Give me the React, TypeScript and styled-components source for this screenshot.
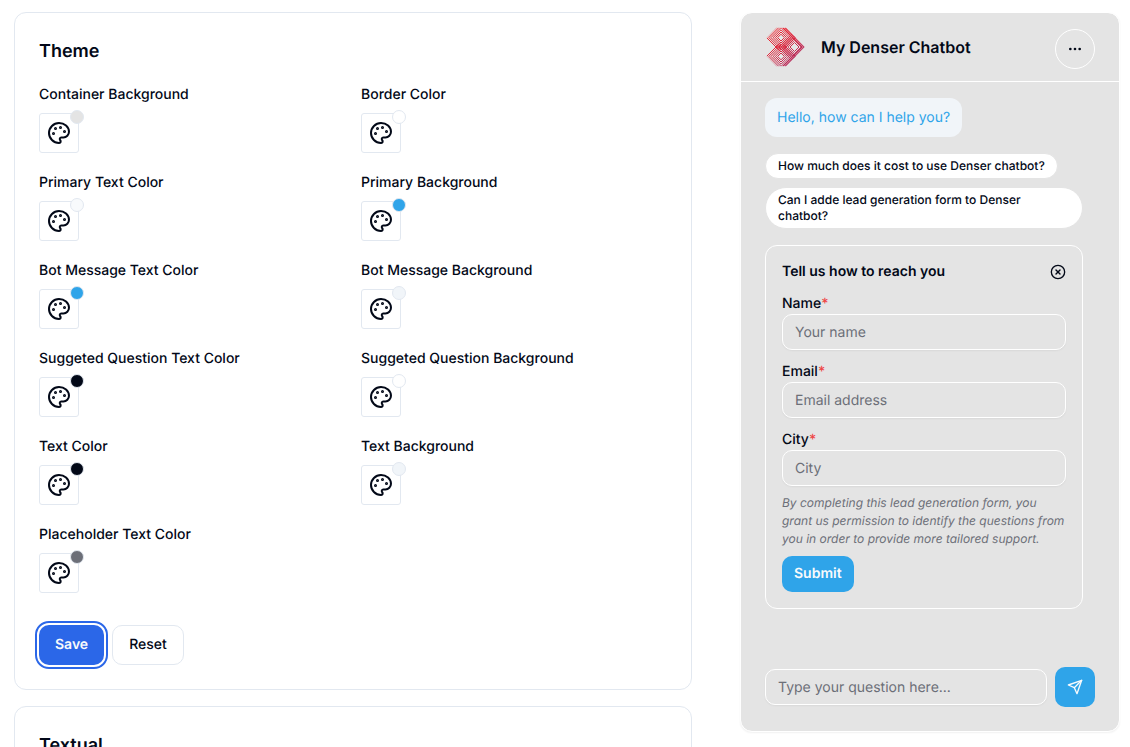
import React from "react";
import styled, { createGlobalStyle } from "styled-components";
import { CircleX, Ellipsis } from "lucide-react";

const GlobalStyle = createGlobalStyle`
  *, *::before, *::after { box-sizing: border-box; }
  body {
    margin: 0;
    background: #ffffff;
    color: #020817;
    font-family: Inter, "Liberation Sans", sans-serif;
    font-size: 14px;
    line-height: 20px;
    text-rendering: geometricPrecision;
  }
  h2, h3, p { margin: 0; }
  button, input { font: inherit; color: inherit; text-rendering: inherit; }
  button { cursor: pointer; }
`;

const Page = styled.main`
  display: flex;
  gap: 48px;
  height: 100vh;
  padding: 0 10px 0 14px;
`;

const Settings = styled.div`
  flex: 1;
  min-width: 0;
  display: flex;
  flex-direction: column;
  gap: 16px;
  padding-top: 12px;
  overflow-y: auto;
  scrollbar-width: none;
`;

const Card = styled.section`
  flex: none;
  padding: 24px;
  border: 1px solid #e2e8f0;
  border-radius: 12px;
`;

const CardTitle = styled.h2`
  font-size: 18px;
  font-weight: 600;
  line-height: 30px;
`;

const ColorGrid = styled.div`
  display: grid;
  grid-template-columns: 1fr 1fr;
  gap: 20px 16px;
  margin-top: 18px;
`;

const ColorField = styled.div`
  display: flex;
  flex-direction: column;
  align-items: flex-start;
  gap: 8px;
`;

const ColorLabel = styled.label`
  font-weight: 500;
`;

const Swatch = styled.div`
  position: relative;
  display: flex;
`;

const SwatchButton = styled.button`
  display: grid;
  place-items: center;
  width: 40px;
  height: 40px;
  padding: 0;
  border: 1px solid #e2e8f0;
  border-radius: 3px;
  background: #ffffff;
`;

const ColorDot = styled.span<{ $color: string }>`
  position: absolute;
  top: -3px;
  right: -5px;
  width: 14px;
  height: 14px;
  border: 1px solid #e2e8f0;
  border-radius: 50%;
  background: ${(p) => p.$color};
`;

const Actions = styled.div`
  display: flex;
  gap: 8px;
  margin-top: 32px;
`;

const ActionButton = styled.button<{ $primary?: boolean }>`
  height: 40px;
  padding: 0 16px;
  border: ${(p) => (p.$primary ? "0" : "1px solid #e2e8f0")};
  border-radius: 10px;
  background: ${(p) => (p.$primary ? "#2b67e8" : "#ffffff")};
  color: ${(p) => (p.$primary ? "#f8fafc" : "#020817")};
  font-weight: ${(p) => (p.$primary ? 600 : 500)};
  outline: ${(p) => (p.$primary ? "2px solid #2b67e8" : "none")};
  outline-offset: 2px;
`;

const Chat = styled.aside`
  display: flex;
  flex-direction: column;
  flex: none;
  width: 380px;
  margin: 12px 0 15px;
  border: 1px solid #ffffff;
  border-radius: 12px;
  background: #e4e4e4;
  background-clip: padding-box;
  box-shadow: 0 1px 2px rgba(0, 0, 0, 0.06);
`;

const ChatHeader = styled.header`
  display: flex;
  gap: 16px;
  padding: 14px 24px 12px;
  border-bottom: 1px solid #ffffff;
`;

const ChatTitle = styled.h2`
  flex: 1;
  font-size: 16px;
  font-weight: 600;
  line-height: 40px;
`;

const MenuButton = styled.button`
  display: grid;
  place-items: center;
  align-self: flex-end;
  width: 40px;
  height: 40px;
  margin-top: 2px;
  padding: 0;
  border: 1px solid #ffffff;
  border-radius: 50%;
  background: transparent;
`;

const Messages = styled.div`
  display: flex;
  flex: 1;
  flex-direction: column;
  align-items: flex-start;
  gap: 16px;
  padding: 16px 36px 16px 24px;
`;

const BotMessage = styled.p`
  padding: 8px 12px;
  border-radius: 12px;
  background: #f1f5f9;
  color: #2fa4e9;
  line-height: 23px;
`;

const Suggestions = styled.div`
  display: flex;
  flex-direction: column;
  align-items: flex-start;
  gap: 8px;
`;

const Suggestion = styled.button`
  padding: 4px 12px;
  border: 1px solid #e4e4e4;
  border-radius: 24px;
  background: #ffffff;
  font-size: 12px;
  font-weight: 500;
  line-height: 16px;
  text-align: left;
`;

const LeadForm = styled.form`
  align-self: stretch;
  padding: 16px;
  border: 1px solid #ffffff;
  border-radius: 12px;
`;

const LeadHeader = styled.div`
  display: flex;
  align-items: center;
  justify-content: space-between;
`;

const LeadTitle = styled.h3`
  font-size: 14px;
  font-weight: 600;
  line-height: 20px;
`;

const CloseButton = styled.button`
  display: flex;
  padding: 0;
  border: 0;
  background: none;
`;

const Field = styled.div`
  display: flex;
  flex-direction: column;
  margin-top: 12px;
`;

const FieldLabel = styled.label`
  font-weight: 500;
`;

const Required = styled.span`
  color: #ef4444;
`;

const TextInput = styled.input`
  flex: 1 1 auto;
  min-width: 0;
  height: 36px;
  padding: 0 12px;
  border: 1px solid #ffffff;
  border-radius: 10px;
  background: transparent;
  box-shadow: 0 1px 2px rgba(0, 0, 0, 0.05);
  outline: none;

  &::placeholder {
    color: #6c6f78;
    opacity: 1;
  }
`;

const Consent = styled.p`
  margin: 8px 0;
  color: #6c6f78;
  font-size: 12px;
  font-style: italic;
  line-height: 18px;
`;

const SubmitButton = styled.button`
  height: 36px;
  padding: 0 12px;
  border: 0;
  border-radius: 10px;
  background: #2fa4e9;
  color: #f8fafc;
  font-weight: 600;
`;

const Composer = styled.form`
  display: flex;
  align-items: center;
  gap: 8px;
  padding: 0 24px 24px;
`;

const SendButton = styled.button`
  display: grid;
  place-items: center;
  flex: none;
  width: 40px;
  height: 40px;
  padding: 0;
  border: 0;
  border-radius: 10px;
  background: #2fa4e9;
  color: #f8fafc;
`;

const Icon = styled.svg.attrs({
  viewBox: "0 0 24 24",
  fill: "none",
  stroke: "currentColor",
  strokeWidth: 2,
  strokeLinecap: "round",
  strokeLinejoin: "round",
  "aria-hidden": true,
})<{ $size: number }>`
  display: block;
  width: ${(p) => p.$size}px;
  height: ${(p) => p.$size}px;
`;

const themeColors = [
  { label: "Container Background", color: "#e4e4e4" },
  { label: "Border Color", color: "#ffffff" },
  { label: "Primary Text Color", color: "#f8fafc" },
  { label: "Primary Background", color: "#2fa4e9" },
  { label: "Bot Message Text Color", color: "#2fa4e9" },
  { label: "Bot Message Background", color: "#f1f5f9" },
  { label: "Suggeted Question Text Color", color: "#020817" },
  { label: "Suggeted Question Background", color: "#ffffff" },
  { label: "Text Color", color: "#020817" },
  { label: "Text Background", color: "#f1f5f9" },
  { label: "Placeholder Text Color", color: "#6c6f78" },
];

const leadFields = [
  { id: "name", label: "Name", placeholder: "Your name", type: "text" },
  { id: "email", label: "Email", placeholder: "Email address", type: "email" },
  { id: "city", label: "City", placeholder: "City", type: "text" },
];

function PaletteIcon() {
  return (
    <Icon $size={24}>
      <g fill="currentColor">
        <circle cx="13.5" cy="6.5" r=".5" />
        <circle cx="17.5" cy="10.5" r=".5" />
        <circle cx="8.5" cy="7.5" r=".5" />
        <circle cx="6.5" cy="12.5" r=".5" />
      </g>
      <path d="M12 2C6.5 2 2 6.5 2 12s4.5 10 10 10c.926 0 1.648-.746 1.648-1.688 0-.437-.18-.835-.437-1.125-.29-.289-.438-.652-.438-1.125a1.64 1.64 0 0 1 1.668-1.668h1.996c3.051 0 5.555-2.503 5.555-5.554C21.965 6.012 17.461 2 12 2z" />
    </Icon>
  );
}

function SendIcon() {
  return (
    <Icon $size={16}>
      <path d="m22 2-7 20-4-9-9-4Z" />
      <path d="M22 2 11 13" />
    </Icon>
  );
}

const diamond = (x: number, y: number, r: number) =>
  `M${x - r} ${y}L${x} ${y - r}L${x + r} ${y}L${x} ${y + r}Z`;

/* Three families of nested diamonds that overlap into a woven arrow. */
function DenserLogo() {
  const lobes = [3.4, 5.6, 7.8, 10, 12.2, 14.4];
  const tip = [4.5, 6.7, 8.9, 11.1, 13.3, 15.5];
  return (
    <svg width="40" height="40" viewBox="-1 0 40 40" fill="none" aria-hidden="true">
      <defs>
        <linearGradient id="weave" gradientUnits="userSpaceOnUse" x1="4" y1="2" x2="34" y2="36">
          <stop offset="0" stopColor="#f5222a" />
          <stop offset="0.5" stopColor="#d92a42" />
          <stop offset="1" stopColor="#a92f68" />
        </linearGradient>
        <clipPath id="bounds">
          <path d="M0 11.5L10.5 0.8H20L38.8 20L20 39.2H10.5L0 28.5L7 20Z" />
        </clipPath>
      </defs>
      <g clipPath="url(#bounds)" stroke="url(#weave)" strokeWidth="1">
        {lobes.map((r) => (
          <React.Fragment key={r}>
            <path d={diamond(15, 10.6, r)} />
            <path d={diamond(15, 29.4, r)} />
          </React.Fragment>
        ))}
        {tip.map((r) => (
          <path key={r} d={diamond(28.5, 20, r)} />
        ))}
        <path d="M19.2 1L38.2 20L19.2 39M17 1L36 20L17 39" />
      </g>
    </svg>
  );
}

export default function App() {
  return (
    <>
      <GlobalStyle />
      <Page>
        <Settings>
          <Card>
            <CardTitle>Theme</CardTitle>
            <ColorGrid>
              {themeColors.map(({ label, color }, i) => {
                const id = `color-${i}`;
                return (
                  <ColorField key={label}>
                    <ColorLabel htmlFor={id}>{label}</ColorLabel>
                    <Swatch>
                      <SwatchButton id={id} type="button">
                        <PaletteIcon />
                      </SwatchButton>
                      <ColorDot $color={color} />
                    </Swatch>
                  </ColorField>
                );
              })}
            </ColorGrid>
            <Actions>
              <ActionButton type="button" $primary>
                Save
              </ActionButton>
              <ActionButton type="button">Reset</ActionButton>
            </Actions>
          </Card>
          <Card>
            <CardTitle>Textual</CardTitle>
          </Card>
        </Settings>

        <Chat>
          <ChatHeader>
            <DenserLogo />
            <ChatTitle>My Denser Chatbot</ChatTitle>
            <MenuButton type="button" aria-label="Menu">
              <Ellipsis size={16} />
            </MenuButton>
          </ChatHeader>
          <Messages>
            <BotMessage>Hello, how can I help you?</BotMessage>
            <Suggestions>
              <Suggestion type="button">How much does it cost to use Denser chatbot?</Suggestion>
              <Suggestion type="button">
                Can I adde lead generation form to Denser chatbot?
              </Suggestion>
            </Suggestions>
            <LeadForm onSubmit={(e) => e.preventDefault()}>
              <LeadHeader>
                <LeadTitle>Tell us how to reach you</LeadTitle>
                <CloseButton type="button" aria-label="Close">
                  <CircleX size={16} />
                </CloseButton>
              </LeadHeader>
              {leadFields.map((f) => (
                <Field key={f.id}>
                  <FieldLabel htmlFor={f.id}>
                    {f.label}
                    <Required>*</Required>
                  </FieldLabel>
                  <TextInput id={f.id} type={f.type} placeholder={f.placeholder} />
                </Field>
              ))}
              <Consent>
                By completing this lead generation form, you grant us permission to identify the
                questions from you in order to provide more tailored support.
              </Consent>
              <SubmitButton type="submit">Submit</SubmitButton>
            </LeadForm>
          </Messages>
          <Composer onSubmit={(e) => e.preventDefault()}>
            <TextInput aria-label="Your question" placeholder="Type your question here..." />
            <SendButton type="submit" aria-label="Send">
              <SendIcon />
            </SendButton>
          </Composer>
        </Chat>
      </Page>
    </>
  );
}
